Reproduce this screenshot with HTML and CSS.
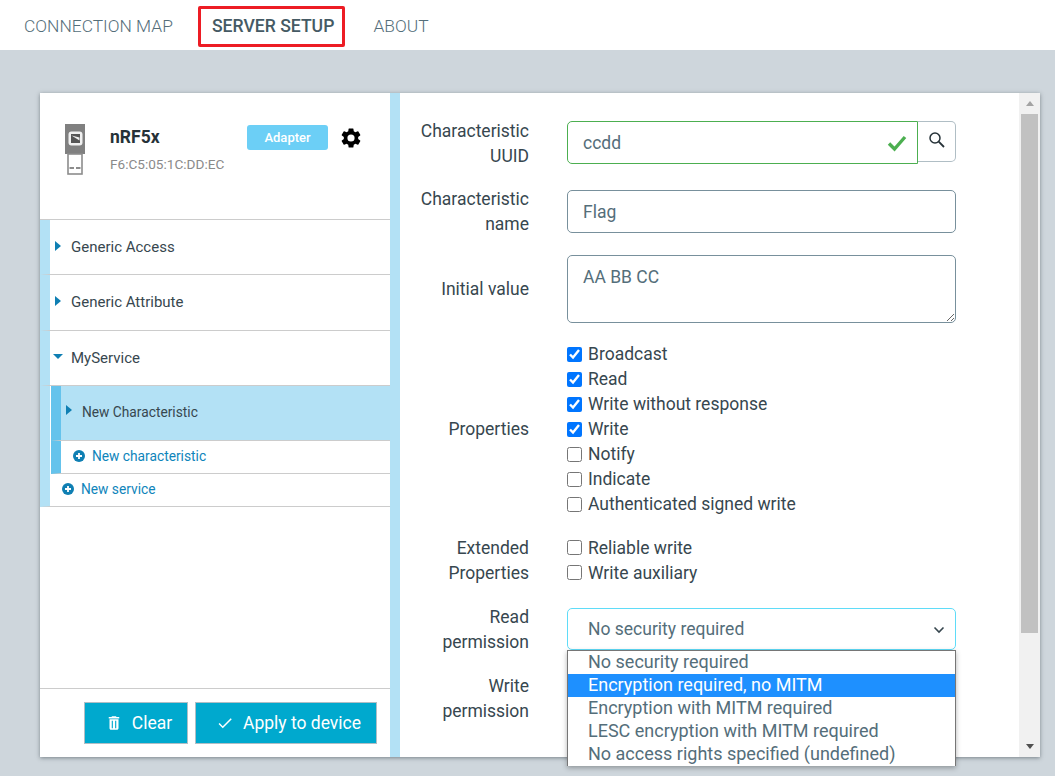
FILE: index.html
```html
<!DOCTYPE html>
<html lang="en">
<head>
    <meta charset="UTF-8">
    <title>Server setup</title>
    <link rel="stylesheet" href="styles.css">
</head>
<body>
    <nav class="nav">
        <a class="tab">CONNECTION MAP</a>
        <a class="tab tab-active">SERVER SETUP</a>
        <a class="tab">ABOUT</a>
    </nav>
    <main class="panel">
        <section class="side">
            <div class="device">
                <svg class="usb" width="20" height="52" viewBox="0 0 20 52">
                    <rect x="0" y="0" width="20" height="30" fill="#808080"/>
                    <rect x="3.500" y="7.500" width="14" height="14" rx="3" fill="#f0f0f0"/>
                    <rect x="6" y="10" width="9" height="9" fill="#555"/>
                    <path d="M6.500 11.500l8 5v-3z" fill="#f0f0f0"/>
                    <rect x="3" y="30" width="14" height="20" fill="#fff" stroke="#8c8c8c" stroke-width="1.600"/>
                    <rect x="4.500" y="43" width="4.500" height="2" fill="#8c8c8c"/>
                    <rect x="11" y="43" width="4.500" height="2" fill="#8c8c8c"/>
                </svg>
                <div class="device-text">
                    <div class="device-name">nRF5x</div>
                    <div class="device-mac">F6:C5:05:1C:DD:EC</div>
                </div>
                <span class="badge">Adapter</span>
                <svg class="gear" width="24" height="24" viewBox="0 0 24 24">
                    <path fill="#000" d="M19.14 12.94c.04-.3.06-.61.06-.94s-.02-.64-.07-.94l2.03-1.58a.49.49 0 0 0 .12-.61l-1.92-3.32a.49.49 0 0 0-.59-.22l-2.39.96c-.5-.38-1.03-.7-1.62-.94l-.36-2.54a.48.48 0 0 0-.48-.41h-3.84a.48.48 0 0 0-.47.41l-.36 2.54c-.59.24-1.13.57-1.62.94l-2.39-.96a.48.48 0 0 0-.59.22L2.74 8.87a.48.48 0 0 0 .12.61l2.03 1.58c-.05.3-.09.63-.09.94s.02.64.07.94l-2.03 1.58a.49.49 0 0 0-.12.61l1.92 3.32c.12.22.37.29.59.22l2.39-.96c.5.38 1.03.7 1.62.94l.36 2.54c.05.24.24.41.48.41h3.84c.24 0 .44-.17.47-.41l.36-2.54c.59-.24 1.13-.56 1.62-.94l2.39.96c.22.08.47 0 .59-.22l1.92-3.32a.48.48 0 0 0-.12-.61l-2.01-1.58zM12 15.6A3.6 3.6 0 1 1 12 8.4a3.6 3.6 0 0 1 0 7.2z"/>
                </svg>
            </div>
            <ul class="tree">
                <li class="row row-service"><span class="arrow arrow-right"></span>Generic Access</li>
                <li class="row row-service"><span class="arrow arrow-right"></span>Generic Attribute</li>
                <li class="row row-service"><span class="arrow arrow-down"></span>MyService</li>
                <li class="nest">
                    <div class="row row-char row-selected"><span class="arrow arrow-right"></span>New Characteristic</div>
                    <div class="row row-add row-add-char">
                        <svg class="plus" width="12" height="12" viewBox="0 0 12 12"><circle cx="6" cy="6" r="6"/><path d="M3 6h6M6 3v6"/></svg>
                        New characteristic
                    </div>
                </li>
                <li class="row row-add row-add-service">
                    <svg class="plus" width="12" height="12" viewBox="0 0 12 12"><circle cx="6" cy="6" r="6"/><path d="M3 6h6M6 3v6"/></svg>
                    New service
                </li>
            </ul>
            <div class="actions">
                <button class="btn btn-clear">
                    <svg width="18" height="18" viewBox="0 0 24 24"><path fill="#fff" d="M6 19c0 1.100.9 2 2 2h8c1.100 0 2-.9 2-2V7H6v12zM9 9h1.500v10H9V9zm4.500 0H15v10h-1.500V9zM15.500 4l-1-1h-5l-1 1H5v2h14V4z"/></svg>
                    Clear
                </button>
                <button class="btn btn-apply">
                    <svg width="18" height="18" viewBox="0 0 24 24"><path fill="#fff" d="M9 16.200 4.800 12l-1.400 1.400L9 19 21 7l-1.400-1.400z"/></svg>
                    Apply to device
                </button>
            </div>
        </section>
        <section class="detail">
            <form class="form">
                <label class="form-label form-label-low">Characteristic UUID</label>
                <div class="uuid">
                    <div class="uuid-box">
                        <input class="field field-valid" value="ccdd">
                        <svg class="valid-check" width="20" height="18" viewBox="0 0 20 18"><path d="M2 9.500l5.500 5.500L18 3" fill="none" stroke="#4caf50" stroke-width="3.400"/></svg>
                    </div>
                    <button type="button" class="search">
                        <svg width="20" height="20" viewBox="0 0 20 20"><circle cx="8" cy="8" r="5" fill="none" stroke="#263238" stroke-width="1.500"/><path d="M11.700 11.700 17 17" stroke="#263238" stroke-width="1.800"/></svg>
                    </button>
                </div>

                <label class="form-label">Characteristic name</label>
                <div class="cell"><input class="field" value="Flag"></div>

                <label class="form-label">Initial value</label>
                <div class="cell"><textarea class="field field-area">AA BB CC</textarea></div>

                <label class="form-label">Properties</label>
                <div class="checks">
                    <label class="check"><input type="checkbox" checked>Broadcast</label>
                    <label class="check"><input type="checkbox" checked>Read</label>
                    <label class="check"><input type="checkbox" checked>Write without response</label>
                    <label class="check"><input type="checkbox" checked>Write</label>
                    <label class="check"><input type="checkbox">Notify</label>
                    <label class="check"><input type="checkbox">Indicate</label>
                    <label class="check"><input type="checkbox">Authenticated signed write</label>
                </div>

                <label class="form-label form-label-low">Extended Properties</label>
                <div class="checks">
                    <label class="check"><input type="checkbox">Reliable write</label>
                    <label class="check"><input type="checkbox">Write auxiliary</label>
                </div>

                <label class="form-label form-label-low">Read permission</label>
                <div class="select-wrap">
                    <select class="field field-select"><option>No security required</option></select>
                    <svg class="chevron" width="12" height="8" viewBox="0 0 12 8"><path d="M1.500 1.500 6 6l4.500-4.500" fill="none" stroke="#37474f" stroke-width="1.600"/></svg>
                    <ul class="dropdown">
                        <li>No security required</li>
                        <li class="dropdown-active">Encryption required, no MITM</li>
                        <li>Encryption with MITM required</li>
                        <li>LESC encryption with MITM required</li>
                        <li>No access rights specified (undefined)</li>
                    </ul>
                </div>

                <label class="form-label form-label-lower">Write permission</label>
                <div class="cell"></div>
            </form>
            <div class="scrollbar">
                <span class="scroll-btn"><i class="tri tri-up"></i></span>
                <span class="scroll-thumb"></span>
                <span class="scroll-btn scroll-btn-end"><i class="tri tri-down"></i></span>
            </div>
        </section>
    </main>
</body>
</html>
```

FILE: styles.css
```css
* {
    box-sizing: border-box;
}
body {
    margin: 0;
    height: 776px;
    overflow: hidden;
    background-color: #ced6dc;
    font-family: Roboto, sans-serif;
    font-size: 17.5px;
    color: #37474f;
}
.nav {
    display: flex;
    align-items: center;
    height: 50px;
    padding: 2px 0 0 24px;
    background: white;
}
.tab {
    font-size: 17.4px;
    font-weight: 300;
    color: #546e7a;
}
.tab-active {
    display: flex;
    align-items: center;
    height: 41px;
    margin: 1px 28px 0 25px;
    padding: 0 8px 2px 11px;
    border: 3px solid #ed1c24;
    border-radius: 2px;
    font-size: 17.6px;
    font-weight: 500;
    color: #455a64;
}
.panel {
    display: flex;
    width: 1000px;
    height: 664px;
    margin: 43px 0 0 40px;
    background: white;
    box-shadow: 0 1px 4px rgba(38, 50, 56, 0.5);
}

/* left side */
.side {
    display: flex;
    flex-direction: column;
    width: 360px;
    height: 100%;
    border-right: 10px solid #b3e1f5;
}
.device {
    display: flex;
    align-items: flex-start;
    height: 127px;
    padding: 31px 0 0 25px;
    border-bottom: 1px solid #ccc;
}
.device-text {
    width: 137px;
    margin-left: 25px;
}
.device-name {
    font-size: 17.5px;
    font-weight: 700;
    line-height: 27px;
    color: #263238;
}
.device-mac {
    margin-top: 5px;
    font-size: 13.600px;
    color: #8a8a8a;
}
.badge {
    width: 81px;
    height: 25px;
    margin-top: 1px;
    border-radius: 3px;
    background: #6ccff6;
    color: white;
    font-size: 13px;
    font-weight: 500;
    line-height: 25px;
    text-align: center;
}
.gear {
    margin: 2px 0 0 11px;
}
.tree {
    flex: 1;
    margin: 0;
    padding: 0;
    list-style: none;
    font-size: 15px;
}
.row {
    display: flex;
    align-items: center;
    border-bottom: 1px solid #ccc;
    border-left: 10px solid #b3e1f5;
}
.row-service {
    height: 55.330px;
    padding-left: 5px;
}
.nest {
    padding-left: 1px;
    border-left: 10px solid #b3e1f5;
}
.row-char {
    height: 55px;
    padding-left: 5px;
    padding-bottom: 2px;
    border-left-color: #65c3ec;
    font-size: 13.750px;
}
.row-selected {
    background: #b3e1f5;
}
.row-add {
    height: 33px;
    gap: 7px;
    padding-bottom: 2px;
    font-size: 13.750px;
    color: #0f85bb;
}
.row-add-char {
    padding-left: 12px;
    border-left-color: #65c3ec;
}
.row-add-service {
    padding-left: 12px;
}
.arrow {
    width: 0;
    height: 0;
    margin-right: 10px;
    border-style: solid;
    border-color: transparent;
}
.arrow-right {
    margin-top: -3px;
    border-width: 5px 0 5px 6px;
    border-left-color: #0f7fb3;
}
.arrow-down {
    margin-left: -2px;
    margin-right: 8px;
    margin-top: -3px;
    border-width: 5.500px 5.500px 0;
    border-top-color: #0f7fb3;
}
.plus circle {
    fill: #0f7fb3;
}
.plus path {
    stroke: white;
    stroke-width: 1.800;
}
.actions {
    display: flex;
    justify-content: flex-end;
    gap: 7px;
    height: 69px;
    padding: 13px 13px 0 0;
    border-top: 1px solid #ccc;
}
.btn {
    display: flex;
    align-items: center;
    justify-content: center;
    gap: 9px;
    height: 42px;
    padding: 0 0 0 5px;
    border: 1px solid #b0bec5;
    background: #00a9ce;
    color: white;
    font-family: inherit;
    font-size: 17.5px;
}
.btn-clear {
    width: 104px;
}
.btn-apply {
    width: 182px;
}

/* right side */
.detail {
    display: flex;
    flex: 1;
    height: 100%;
}
.form {
    flex: 1;
    display: grid;
    grid-template-columns: 129px 389px;
    grid-template-rows: 50px 50px 68px 175px 50px 50px 50px;
    column-gap: 38px;
    row-gap: 18.500px;
    align-content: start;
    padding-top: 25px;
}
.form-label {
    align-self: center;
    text-align: right;
    line-height: 25px;
}
.form-label-low {
    padding-top: 2px;
}
.form-label-lower {
    padding-top: 4px;
}
.cell {
    align-self: center;
}
.field {
    display: block;
    width: 100%;
    height: 43px;
    padding: 0 15px;
    border: 1px solid #78909c;
    border-radius: 5px;
    background: white;
    font-family: inherit;
    font-size: 17.5px;
    color: #546e7a;
    outline: none;
}
.uuid {
    display: flex;
    align-self: start;
    margin-top: 3px;
}
.uuid-box {
    position: relative;
    width: 351px;
}
.field.field-valid {
    padding-top: 1px;
    border-color: #4caf50;
    border-radius: 5px 0 0 5px;
}
.valid-check {
    position: absolute;
    top: 13px;
    right: 11px;
}
.search {
    display: flex;
    align-items: center;
    justify-content: center;
    width: 38px;
    height: 41px;
    padding: 0 0 3px;
    border: 1px solid #b0bec5;
    border-left: 0;
    border-radius: 0 5px 5px 0;
    background: white;
}
.field-area {
    height: 68px;
    padding-top: 9px;
    line-height: 24px;
}
.checks {
    display: flex;
    flex-direction: column;
}
.check {
    display: flex;
    align-items: center;
    height: 25px;
}
.check input {
    width: 15px;
    height: 15px;
    margin: 0 6px 0 0;
}
.select-wrap {
    position: relative;
    align-self: center;
}
.field-select {
    height: 42px;
    padding-left: 20px;
    border-color: #5fdcf8;
    appearance: none;
}
.chevron {
    position: absolute;
    top: 18px;
    right: 11px;
}
.dropdown {
    position: absolute;
    top: 42px;
    left: 0;
    z-index: 5;
    width: 389px;
    margin: 0;
    padding: 0;
    list-style: none;
    border: 1px solid #767676;
    border-bottom: 0;
    background: white;
    box-shadow: 0 2px 5px rgba(0, 0, 0, 0.3);
    color: #546e7a;
    font-size: 18px;
}
.dropdown li {
    height: 23px;
    padding-left: 20px;
    line-height: 21px;
}
.dropdown .dropdown-active {
    background: #1e90ff;
    color: white;
}
.scrollbar {
    display: flex;
    flex-direction: column;
    width: 21px;
    background: #f1f1f1;
}
.scroll-btn {
    display: flex;
    align-items: center;
    justify-content: center;
    height: 21px;
}
.scroll-btn-end {
    margin-top: auto;
}
.scroll-thumb {
    height: 519px;
    margin: 0 2px;
    background: #c1c1c1;
}
.tri {
    width: 0;
    height: 0;
    border-left: 4.500px solid transparent;
    border-right: 4.500px solid transparent;
}
.tri-up {
    border-bottom: 5px solid #a3a3a3;
}
.tri-down {
    border-top: 5px solid #505050;
}
```
